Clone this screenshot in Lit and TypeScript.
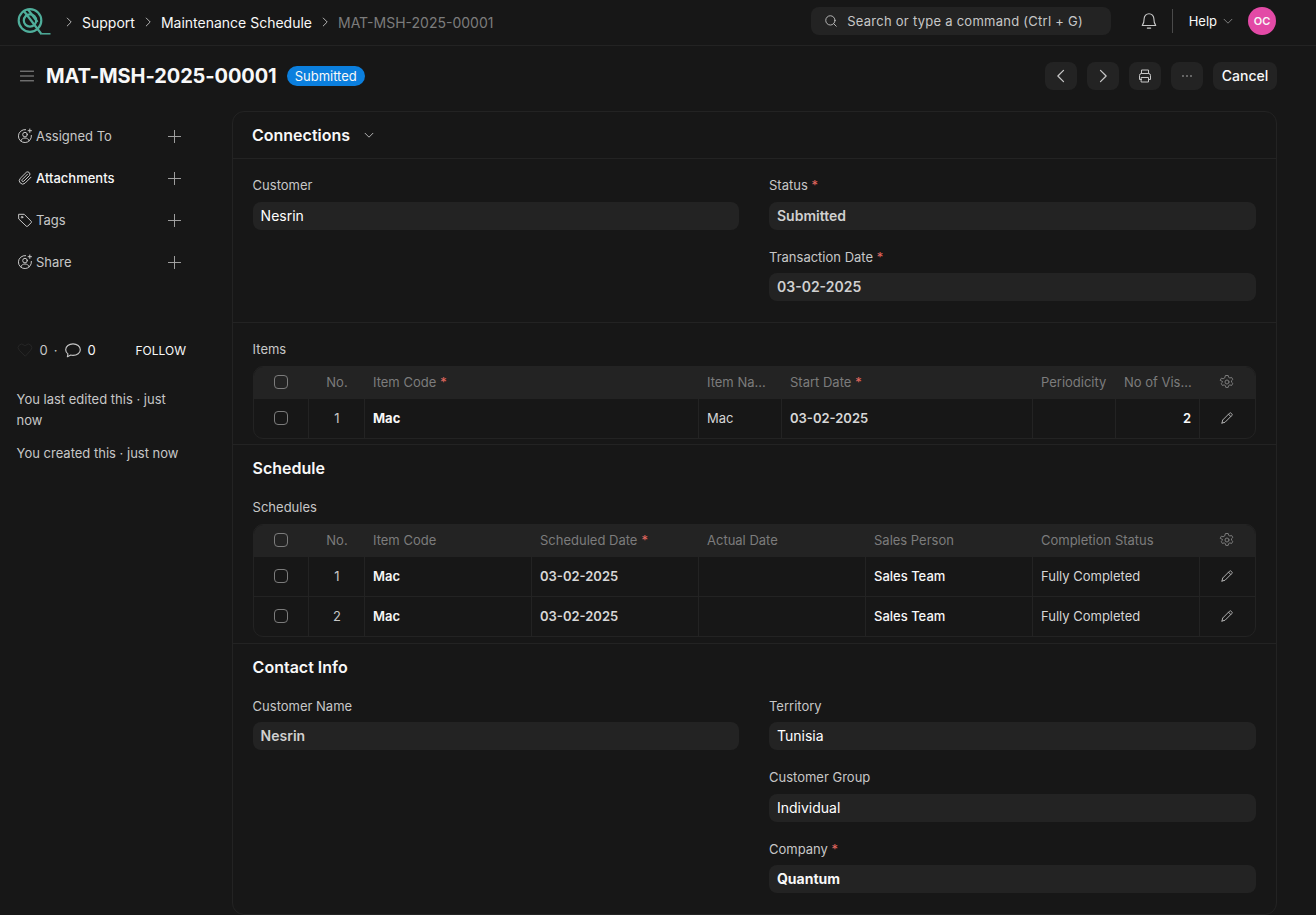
import { css, html, LitElement, svg, TemplateResult } from "lit";
import { customElement } from "lit/decorators.js";

const icon = (size: number, body: unknown, sw = 1): TemplateResult => html`
  <svg
    width="${size}"
    height="${size}"
    viewBox="0 0 16 16"
    fill="none"
    stroke="currentColor"
    stroke-width="${sw}"
    stroke-linecap="round"
    stroke-linejoin="round"
  >
    ${body}
  </svg>
`;

const chevRight = svg`<path d="M6 3.5 10.5 8 6 12.5" />`;
const chevLeft = svg`<path d="M10 3.5 5.5 8 10 12.5" />`;
const chevDown = svg`<path d="M3.5 6 8 10.5 12.5 6" />`;
const plus = svg`<path d="M8 1.5v13M1.5 8h13" />`;
const pencil = svg`<path d="M3 13l.7-3L10.5 3.2a1.2 1.2 0 0 1 1.7 0l.6.6a1.2 1.2 0 0 1 0 1.7L6 12.3 3 13ZM9.5 4.2l2.3 2.3" />`;
const gear = svg`<circle cx="8" cy="8" r="2" /><path d="M6.8 1.5h2.4l.4 1.8 1.3.7 1.7-.6 1.2 2.1-1.3 1.2v1.5l1.3 1.2-1.2 2.1-1.7-.6-1.3.7-.4 1.8H6.8l-.4-1.8-1.3-.7-1.7.6-1.2-2.1 1.3-1.2V7.5L1.2 6.3l1.2-2.1 1.7.6 1.3-.7Z" />`;
const userPlus = svg`<path d="M8.6 1.6A6.5 6.5 0 1 0 14.4 7.4" /><circle cx="8" cy="6.6" r="2.3" /><path d="M3.8 12.8c.6-1.8 2.2-2.8 4.2-2.8s3.600 1 4.200 2.800M12.800 1v3.400M11.100 2.700h3.400" />`;
const clip = svg`<path d="M14 7.200 8 13.200a3.400 3.400 0 0 1-4.800-4.800l6.100-6.100a2.300 2.300 0 0 1 3.200 3.200L6.800 11.200a1.100 1.100 0 0 1-1.600-1.600L10.500 4.200" />`;
const tag = svg`<path d="M2 2.300h5.200L14.200 9.300a1 1 0 0 1 0 1.400L10.700 14.200a1 1 0 0 1-1.400 0L2 7.200Z" /><circle cx="5" cy="5.200" r=".8" />`;

interface Col {
  label: string;
  req?: boolean;
}

const itemCols: Col[] = [
  { label: "Item Code", req: true },
  { label: "Item Na..." },
  { label: "Start Date", req: true },
  { label: "Periodicity" },
  { label: "No of Vis..." },
];

const schedCols: Col[] = [
  { label: "Item Code" },
  { label: "Scheduled Date", req: true },
  { label: "Actual Date" },
  { label: "Sales Person" },
  { label: "Completion Status" },
];

@customElement("app-root")
export default class AppRoot extends LitElement {
  static styles = css`
    :host {
      display: block;
      height: 915px;
      overflow: hidden;
      background: #171717;
      color: #f8f8f8;
      font-family: Inter, "Liberation Sans", sans-serif;
      font-size: 13px;
    }

    svg {
      display: block;
      flex: none;
    }

    .navbar {
      height: 46px;
      border-bottom: 1px solid #232323;
      display: flex;
      align-items: center;
      padding: 0 40px 3px 17px;
      box-sizing: border-box;
    }

    .crumbs {
      display: flex;
      align-items: center;
      font-size: 14px;
      color: #f8f8f8;
      margin: 2px 0 0 11px;
      flex: 1;
    }

    .crumbs svg {
      color: #c7c7c7;
      margin-right: 6px;
    }

    .crumbs span {
      margin-right: 6px;
    }

    .crumbs .last {
      color: #7c7c7c;
    }

    .search {
      width: 300px;
      height: 28px;
      border-radius: 8px;
      background: #232323;
      display: flex;
      align-items: center;
      gap: 9.5px;
      padding-left: 13px;
      box-sizing: border-box;
      color: #c7c7c7;
      letter-spacing: 0.02em;
      margin-right: 29px;
    }

    .bell {
      color: #c7c7c7;
    }

    .vsep {
      width: 1px;
      height: 24px;
      background: #4a4a4a;
      margin: 0 16px 0 14px;
    }

    .help {
      display: flex;
      align-items: center;
      gap: 4px;
      margin-right: 13px;
    }

    .help svg {
      color: #8a8a8a;
    }

    .avatar {
      width: 28px;
      height: 28px;
      border-radius: 50%;
      background: #e34aa6;
      display: grid;
      place-items: center;
      font-size: 11px;
      font-weight: 600;
      color: #f8f8f8;
    }

    .head {
      height: 60px;
      margin-bottom: 5px;
      display: flex;
      align-items: center;
      padding: 0 39px 0 20px;
      box-sizing: border-box;
    }

    .burger {
      color: #a8a8a8;
      margin-right: 12px;
    }

    .title {
      font-size: 20px;
      font-weight: 700;
      letter-spacing: -0.1px;
      margin-right: 10px;
      white-space: nowrap;
    }

    .badge {
      height: 20px;
      line-height: 20px;
      border-radius: 10px;
      background: #0b7fde;
      color: #f8f8f8;
      font-size: 13px;
      padding: 0 8px;
    }

    .actions {
      margin-left: auto;
      display: flex;
      gap: 10px;
    }

    .btn {
      height: 28px;
      width: 32px;
      border-radius: 8px;
      background: #232323;
      display: grid;
      place-items: center;
      color: #c7c7c7;
      font-size: 14px;
      font-weight: 500;
    }

    .btn.text {
      width: 64px;
      padding-bottom: 2px;
      box-sizing: border-box;
      color: #f8f8f8;
    }

    .layout {
      display: grid;
      grid-template-columns: 232px 1045px;
      align-items: start;
    }

    .side {
      padding: 4px 46px 0 16.6px;
      color: #c7c7c7;
    }

    .attach {
      height: 42px;
      display: flex;
      align-items: center;
      gap: 3px;
      margin: 0 4px 0 0.4px;
    }

    .attach .grow {
      flex: 1;
    }

    .attach .add {
      color: #a8a8a8;
    }

    .attach.on {
      color: #f8f8f8;
      font-weight: 500;
    }

    .attach.on > svg:first-child {
      color: #c7c7c7;
    }

    .stats {
      margin-top: 55px;
      display: flex;
      align-items: center;
      height: 24px;
      color: #c7c7c7;
    }

    .stats .heart {
      color: #262626;
      margin: 0 7px 0 0;
    }

    .stats .dot {
      margin: 0 6px;
    }

    .stats .white {
      color: #f8f8f8;
      margin-left: 6px;
    }

    .stats .follow {
      margin-left: auto;
      color: #f8f8f8;
      font-size: 12px;
    }

    .activity {
      margin: 27px 0 0;
      line-height: 21px;
      color: #c7c7c7;
    }

    .activity + .activity {
      margin-top: 12px;
    }

    .card {
      border: 1px solid #232323;
      border-radius: 12px;
      box-sizing: border-box;
      height: 804px;
    }

    .conn {
      height: 46px;
      display: flex;
      align-items: center;
      gap: 12px;
      padding-left: 19px;
      font-size: 16px;
      font-weight: 600;
      border-bottom: 1px solid #232323;
    }

    .conn svg {
      color: #c7c7c7;
    }

    .section {
      border-bottom: 1px solid #232323;
      padding: 0 20px 0 19.6px;
      box-sizing: border-box;
    }

    .section:last-child {
      border-bottom: none;
    }

    .section.main {
      height: 164px;
      padding-top: 18.1px;
    }

    .section.items {
      height: 122px;
      padding-top: 18px;
    }

    .section.sched {
      height: 199px;
      padding-top: 13px;
    }

    .section.contact {
      padding-top: 13px;
    }

    .cols {
      display: grid;
      grid-template-columns: 486.4px 487px;
      column-gap: 30px;
    }

    .field {
      margin-bottom: 18.7px;
    }

    .field:last-child {
      margin-bottom: 0;
    }

    .label {
      height: 17px;
      line-height: 17px;
      color: #c7c7c7;
      margin-bottom: 7.8px;
    }

    .section.items .label,
    .section.sched .label {
      margin-bottom: 8px;
    }

    .req {
      color: #e5675f;
    }

    .input {
      height: 28px;
      line-height: 28px;
      border-radius: 8px;
      background: #232323;
      padding: 0 8px;
      font-size: 14px;
      font-weight: 400;
      color: #ffffff;
    }

    .input.ro {
      font-weight: 600;
      color: #d0d0d0;
    }

    .input.strong {
      font-weight: 700;
      color: #f8f8f8;
    }

    .h2 {
      font-size: 16px;
      font-weight: 600;
    }

    .section.sched .h2 {
      margin-bottom: 21px;
    }

    .section.contact .h2 {
      margin-bottom: 20.6px;
    }

    .grid {
      border: 1px solid #232323;
      border-radius: 10px;
      overflow: hidden;
    }

    .row {
      display: grid;
      height: 40px;
      border-top: 1px solid #232323;
      box-sizing: border-box;
    }

    .row.items {
      grid-template-columns: 54.4px 56px 334px 83px 251px 83px 84px 1fr;
    }

    .row.sched {
      grid-template-columns: 54.4px 56px 167px 167px 167px 167px 167px 1fr;
    }

    .row.hdr {
      height: 32px;
      border-top: none;
      background: #232323;
      color: #7c7c7c;
    }

    .row.hdr + .row {
      height: 39px;
      border-top: none;
    }

    .cell {
      display: flex;
      align-items: center;
      padding: 0 8px 2px;
      border-left: 1px solid #232323;
      white-space: nowrap;
      overflow: hidden;
      min-width: 0;
    }

    .cell:first-child {
      border-left: none;
    }

    .hdr .cell {
      border-left-color: transparent;
      gap: 4px;
      padding-bottom: 2px;
    }

    .hdr + .row .cell {
      padding-bottom: 1px;
    }

    .cell.center {
      justify-content: center;
      padding-left: 0;
      padding-right: 0;
    }

    .cell.num,
    .cell.no {
      padding-left: 1px;
    }

    .cell.right {
      justify-content: flex-end;
    }

    .cell.bold {
      font-weight: 700;
      color: #f8f8f8;
    }

    .cell.semi {
      font-weight: 600;
      color: #d8d8d8;
    }

    .cell.strong {
      font-weight: 600;
      color: #f8f8f8;
    }

    .cell.medium {
      font-weight: 500;
      color: #f8f8f8;
    }

    .cell.plain {
      color: #d5d5d5;
    }

    .cell.num {
      color: #c7c7c7;
    }

    .cell.tool {
      color: #b0b0b0;
      padding-right: 1px;
    }

    .check {
      width: 14px;
      height: 14px;
      border: 1px solid #7c7c7c;
      border-radius: 4px;
      box-sizing: border-box;
    }
  `;

  render() {
    return html`
      <div class="navbar">
        ${this.logo()}
        <div class="crumbs">
          ${icon(14, chevRight)}<span>Support</span>
          ${icon(14, chevRight)}<span>Maintenance Schedule</span>
          ${icon(14, chevRight)}<span class="last">MAT-MSH-2025-00001</span>
        </div>
        <div class="search">
          ${icon(14, svg`<circle cx="7.300" cy="7.300" r="5.300" /><path d="M11.200 11.200 14 14" />`)}
          <span>Search or type a command (Ctrl + G)</span>
        </div>
        <div class="bell">
          ${icon(18, svg`<path d="M8 1.500a4.300 4.300 0 0 0-4.300 4.300c0 3.700-1.200 5.500-1.700 6.200h12c-.5-.7-1.700-2.500-1.700-6.200A4.300 4.300 0 0 0 8 1.500ZM6.500 14.300h3" />`)}
        </div>
        <div class="vsep"></div>
        <div class="help">Help ${icon(14, chevDown)}</div>
        <div class="avatar">OC</div>
      </div>

      <div class="head">
        <div class="burger">${icon(14, svg`<path d="M.5 2.500h15M.5 8h15M.5 13.500h15" />`)}</div>
        <div class="title">MAT-MSH-2025-00001</div>
        <div class="badge">Submitted</div>
        <div class="actions">
          <div class="btn">${icon(20, chevLeft)}</div>
          <div class="btn">${icon(20, chevRight)}</div>
          <div class="btn">
            ${icon(16, svg`<path d="M4.500 5.500V2h7v3.500M4.500 11.500H2.500v-4a2 2 0 0 1 2-2h7a2 2 0 0 1 2 2v4h-2M4.500 9.500h7V14h-7Z" />`)}
          </div>
          <div class="btn">${icon(16, svg`<path d="M4 8h.01M8 8h.01M12 8h.01" />`, 1.5)}</div>
          <div class="btn text">Cancel</div>
        </div>
      </div>

      <div class="layout">
        <div class="side">
          ${this.attach("Assigned To", userPlus)}
          ${this.attach("Attachments", clip, true)}
          ${this.attach("Tags", tag)}
          ${this.attach("Share", userPlus)}
          <div class="stats">
            <span class="heart">
              ${icon(16, svg`<path d="M8 14 2.200 8.200a3.500 3.500 0 0 1 5-5L8 4l.8-.8a3.500 3.500 0 0 1 5 5Z" />`)}
            </span>
            0<span class="dot">·</span>
            ${icon(18, svg`<path d="M8 2.500c-3.600 0-6.500 2.300-6.500 5.200 0 1.500.8 2.800 2 3.700L3 14l3-1.500c.6.200 1.300.300 2 .3 3.600 0 6.500-2.200 6.500-5.100S11.600 2.500 8 2.500Z" />`)}
            <span class="white">0</span>
            <span class="follow">FOLLOW</span>
          </div>
          <p class="activity">You last edited this · just now</p>
          <p class="activity">You created this · just now</p>
        </div>

        <div class="card">
          <div class="conn">Connections ${icon(14, chevDown)}</div>

          <div class="section main">
            <div class="cols">
              <div>${this.field("Customer", "Nesrin")}</div>
              <div>
                ${this.field("Status", "Submitted", true, "ro")}
                ${this.field("Transaction Date", "03-02-2025", true, "ro")}
              </div>
            </div>
          </div>

          <div class="section items">
            <div class="label">Items</div>
            ${this.itemsGrid()}
          </div>

          <div class="section sched">
            <div class="h2">Schedule</div>
            <div class="label">Schedules</div>
            ${this.schedGrid()}
          </div>

          <div class="section contact">
            <div class="h2">Contact Info</div>
            <div class="cols">
              <div>${this.field("Customer Name", "Nesrin", false, "ro")}</div>
              <div>
                ${this.field("Territory", "Tunisia")}
                ${this.field("Customer Group", "Individual")}
                ${this.field("Company", "Quantum", true, "strong")}
              </div>
            </div>
          </div>
        </div>
      </div>
    `;
  }

  logo(): TemplateResult {
    return html`
      <svg width="34" height="32" viewBox="0 0 34 32" fill="none" stroke="#4fae9b" stroke-width="2.200">
        <circle cx="13" cy="15.500" r="11.300" />
        <circle cx="13" cy="15.500" r="6.200" />
        <path d="M6.500 5.500 24 28.500M11 4.500 20.500 17" />
        <path d="M23 28.800H33.500" stroke-width="1.500" />
      </svg>
    `;
  }

  attach(label: string, glyph: unknown, on = false): TemplateResult {
    return html`
      <div class="attach ${on ? "on" : ""}">
        ${icon(16, glyph)}
        <span>${label}</span>
        <span class="grow"></span>
        <span class="add">${icon(15, plus)}</span>
      </div>
    `;
  }

  field(label: string, value: string, req = false, cls = ""): TemplateResult {
    return html`
      <div class="field">
        <div class="label">${label}${req ? html` <span class="req">*</span>` : ""}</div>
        <div class="input ${cls}">${value}</div>
      </div>
    `;
  }

  header(kind: string, cols: Col[]): TemplateResult {
    return html`
      <div class="row hdr ${kind}">
        <div class="cell center"><div class="check"></div></div>
        <div class="cell center no">No.</div>
        ${cols.map(
          (c) => html`
            <div class="cell">${c.label}${c.req ? html`<span class="req">*</span>` : ""}</div>
          `
        )}
        <div class="cell center">${icon(16, gear)}</div>
      </div>
    `;
  }

  itemsGrid(): TemplateResult {
    return html`
      <div class="grid">
        ${this.header("items", itemCols)}
        <div class="row items">
          <div class="cell center"><div class="check"></div></div>
          <div class="cell center num">1</div>
          <div class="cell bold">Mac</div>
          <div class="cell plain">Mac</div>
          <div class="cell semi">03-02-2025</div>
          <div class="cell"></div>
          <div class="cell right strong">2</div>
          <div class="cell center tool">${icon(16, pencil)}</div>
        </div>
      </div>
    `;
  }

  schedGrid(): TemplateResult {
    return html`
      <div class="grid">
        ${this.header("sched", schedCols)}
        ${[1, 2].map(
          (n) => html`
            <div class="row sched">
              <div class="cell center"><div class="check"></div></div>
              <div class="cell center num">${n}</div>
              <div class="cell strong">Mac</div>
              <div class="cell semi">03-02-2025</div>
              <div class="cell"></div>
              <div class="cell medium">Sales Team</div>
              <div class="cell plain">Fully Completed</div>
              <div class="cell center tool">${icon(16, pencil)}</div>
            </div>
          `
        )}
      </div>
    `;
  }
}
